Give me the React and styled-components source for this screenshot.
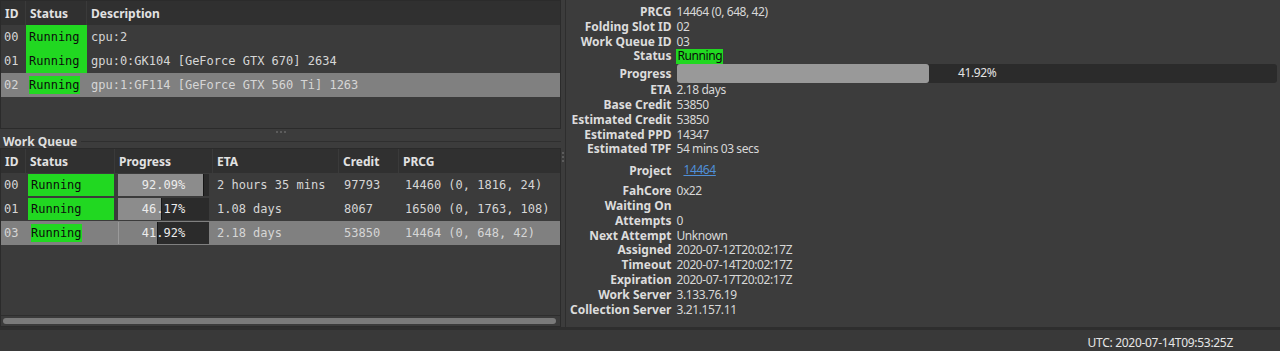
import React from "react";
import styled, { createGlobalStyle } from "styled-components";

const GlobalStyle = createGlobalStyle`
  html, body {
    margin: 0;
    background: #3c3c3c;
  }
  body {
    font-family: "Noto Sans", sans-serif;
    font-size: 12px;
    color: #dadada;
  }
`;

const GREEN = "#21d821";

const Window = styled.div`
  width: 1280px;
  height: 351px;
  display: flex;
  flex-direction: column;
  overflow: hidden;
`;

const Main = styled.div`
  height: 327px;
  display: flex;
`;

const LeftPane = styled.div`
  width: 561px;
  display: flex;
  flex-direction: column;
`;

const TableBox = styled.div`
  border: 1px solid #2b2b2b;
  background: #3b3b3b;
  display: flex;
  flex-direction: column;
  height: ${(p) => (p.$height ? `${p.$height}px` : "auto")};
  flex: ${(p) => (p.$grow ? 1 : "none")};
  box-sizing: border-box;
`;

const Row = styled.div`
  display: grid;
  grid-template-columns: ${(p) => p.$cols};
  height: 24px;
  background: ${(p) => (p.$selected ? "#808080" : "transparent")};
  font-family: "DejaVu Sans Mono", monospace;
  font-size: 12px;
  color: #d6d6d6;
`;

const HeaderRow = styled(Row)`
  background: #303030;
  font-family: "Noto Sans", sans-serif;
  font-weight: bold;
  color: #e2e2e2;
`;

const HeadCell = styled.div`
  display: flex;
  align-items: center;
  padding-left: 4px;
  border-right: 1px solid #3a3a3a;
  white-space: nowrap;
  &:last-child {
    border-right: none;
  }
`;

const Cell = styled.div`
  display: flex;
  align-items: center;
  padding-left: ${(p) => (p.$pad ?? 4)}px;
  white-space: nowrap;
  overflow: hidden;
`;

const StatusCell = styled.div`
  display: flex;
  align-items: center;
  margin: ${(p) => p.$inset || "0"};
  padding-left: 3px;
  background: ${(p) => (p.$selected ? "transparent" : GREEN)};
  color: #0c0c0c;
  white-space: nowrap;
`;

const StatusText = styled.span`
  background: ${GREEN};
  line-height: 18px;
`;

const ProgressCell = styled.div`
  position: relative;
  margin: 1px 4px 1px 3px;
  background: #2b2b2b;
  display: flex;
  align-items: center;
  justify-content: center;
`;

const ProgressFill = styled.div`
  position: absolute;
  left: 0;
  top: 0;
  bottom: 0;
  background: ${(p) => (p.$selected ? "#808080" : "#8c8c8c")};
  border-left: 1px solid ${(p) => (p.$selected ? "#9a9a9a" : "#8c8c8c")};
  box-shadow: 1px 0 0 #161616;
`;

const ProgressLabel = styled.span`
  position: relative;
  color: #ececec;
`;

const HSplit = styled.div`
  height: 7px;
  display: flex;
  justify-content: center;
  align-items: flex-start;
  padding-top: 2px;
  box-sizing: border-box;
`;

const Dots = styled.div`
  display: flex;
  flex-direction: ${(p) => (p.$vertical ? "column" : "row")};
  gap: 2px;
  & > span {
    width: 2px;
    height: 2px;
    background: #5c5c5c;
  }
`;

const GroupTitle = styled.div`
  height: 12px;
  display: flex;
  align-items: center;
  gap: 4px;
  padding-left: 3px;
  font-weight: bold;
  color: #dedede;
  line-height: 12px;
`;

const GroupLine = styled.div`
  flex: 1;
  height: 1px;
  background: #2f2f2f;
  margin-top: -2px;
`;

const Filler = styled.div`
  flex: 1;
`;

const ScrollTrack = styled.div`
  height: 11px;
  border-top: 1px solid #2e2e2e;
  display: flex;
  align-items: center;
  padding: 0 4px 0 2px;
  box-sizing: border-box;
`;

const ScrollThumb = styled.div`
  flex: 1;
  height: 6px;
  border-radius: 3px;
  background: #7a7a7a;
`;

const VSplit = styled.div`
  width: 4px;
  display: flex;
  justify-content: center;
  padding-top: 152px;
  box-sizing: border-box;
`;

const RightPane = styled.div`
  flex: 1;
  border-left: 1px solid #2e2e2e;
  padding: 5px 3px 0 4px;
`;

const InfoGrid = styled.div`
  display: grid;
  grid-template-columns: auto 1fr;
  column-gap: 5px;
`;

const Label = styled.div`
  font-weight: bold;
  text-align: right;
  white-space: nowrap;
  color: #dcdcdc;
  height: ${(p) => p.$h}px;
  line-height: ${(p) => p.$h}px;
`;

const Value = styled.div`
  white-space: nowrap;
  color: #d8d8d8;
  letter-spacing: -0.4px;
  height: ${(p) => p.$h}px;
  line-height: 14.8px;
  display: flex;
  align-items: center;
`;

const RunningBadge = styled.span`
  background: ${GREEN};
  color: #0a0a0a;
  padding: 0 1px;
`;

const BigBar = styled.div`
  position: relative;
  flex: 1;
  height: 19px;
  margin-left: 1px;
  border-radius: 3px;
  background: #2b2b2b;
  display: flex;
  align-items: center;
  justify-content: center;
`;

const BigFill = styled.div`
  position: absolute;
  left: 0;
  top: 0;
  bottom: 0;
  border-radius: 3px;
  background: #999999;
`;

const BigLabel = styled.span`
  position: relative;
  color: #e4e4e4;
`;

const Link = styled.a`
  color: #4f8fd8;
  text-decoration: underline;
  padding-left: 7px;
`;

const StatusBar = styled.div`
  height: 24px;
  border-top: 3px solid #2e2e2e;
  background: #393939;
  box-sizing: border-box;
  display: flex;
  justify-content: flex-end;
  align-items: center;
  padding: 3px 47px 0 0;
  color: #e6e6e6;
  letter-spacing: -0.3px;
`;

const slotCols = "25px 61px 1fr";
const queueCols = "25px 89px 98px 126px 60px 1fr";

const slots = [
  { id: "00", desc: "cpu:2" },
  { id: "01", desc: "gpu:0:GK104 [GeForce GTX 670] 2634" },
  { id: "02", desc: "gpu:1:GF114 [GeForce GTX 560 Ti] 1263", selected: true },
];

const queue = [
  { id: "00", pct: 92.09, eta: "2 hours 35 mins", credit: "97793", prcg: "14460 (0, 1816, 24)" },
  { id: "01", pct: 46.17, eta: "1.08 days", credit: "8067", prcg: "16500 (0, 1763, 108)" },
  { id: "03", pct: 41.92, eta: "2.18 days", credit: "53850", prcg: "14464 (0, 648, 42)", selected: true },
];

const info = [
  ["PRCG", "14464 (0, 648, 42)"],
  ["Folding Slot ID", "02"],
  ["Work Queue ID", "03"],
  ["Status", "status"],
  ["Progress", "progress"],
  ["ETA", "2.18 days"],
  ["Base Credit", "53850"],
  ["Estimated Credit", "53850"],
  ["Estimated PPD", "14347"],
  ["Estimated TPF", "54 mins 03 secs"],
  ["Project", "project"],
  ["FahCore", "0x22"],
  ["Waiting On", ""],
  ["Attempts", "0"],
  ["Next Attempt", "Unknown"],
  ["Assigned", "2020-07-12T20:02:17Z"],
  ["Timeout", "2020-07-14T20:02:17Z"],
  ["Expiration", "2020-07-17T20:02:17Z"],
  ["Work Server", "3.133.76.19"],
  ["Collection Server", "3.21.157.11"],
];

const ThreeDots = ({ vertical }) => (
  <Dots $vertical={vertical}>
    <span />
    <span />
    <span />
  </Dots>
);

const rowHeight = (value) =>
  value === "progress" ? 19 : value === "project" ? 27 : 14.8;

const renderValue = (value) => {
  const h = rowHeight(value);
  if (value === "status") {
    return (
      <Value $h={h}>
        <RunningBadge>Running</RunningBadge>
      </Value>
    );
  }
  if (value === "progress") {
    return (
      <Value $h={h}>
        <BigBar>
          <BigFill style={{ width: "41.92%" }} />
          <BigLabel>41.92%</BigLabel>
        </BigBar>
      </Value>
    );
  }
  if (value === "project") {
    return (
      <Value $h={h}>
        <Link>14464</Link>
      </Value>
    );
  }
  return <Value $h={h}>{value}</Value>;
};

const App = () => {
  return (
    <Window>
      <GlobalStyle />
      <Main>
        <LeftPane>
          <TableBox $height={129}>
            <HeaderRow $cols={slotCols}>
              <HeadCell>ID</HeadCell>
              <HeadCell>Status</HeadCell>
              <HeadCell>Description</HeadCell>
            </HeaderRow>
            {slots.map((s) => (
              <Row key={s.id} $cols={slotCols} $selected={s.selected}>
                <Cell $pad={3}>{s.id}</Cell>
                {s.selected ? (
                  <StatusCell $selected>
                    <StatusText>Running</StatusText>
                  </StatusCell>
                ) : (
                  <StatusCell>Running</StatusCell>
                )}
                <Cell>{s.desc}</Cell>
              </Row>
            ))}
          </TableBox>
          <HSplit>
            <ThreeDots />
          </HSplit>
          <GroupTitle>
            Work Queue
            <GroupLine />
          </GroupTitle>
          <TableBox $grow>
            <HeaderRow $cols={queueCols}>
              <HeadCell>ID</HeadCell>
              <HeadCell>Status</HeadCell>
              <HeadCell>Progress</HeadCell>
              <HeadCell>ETA</HeadCell>
              <HeadCell>Credit</HeadCell>
              <HeadCell>PRCG</HeadCell>
            </HeaderRow>
            {queue.map((q) => (
              <Row key={q.id} $cols={queueCols} $selected={q.selected}>
                <Cell $pad={3}>{q.id}</Cell>
                {q.selected ? (
                  <StatusCell $selected $inset="1px 1px 1px 2px">
                    <StatusText>Running</StatusText>
                  </StatusCell>
                ) : (
                  <StatusCell $inset="1px 1px 1px 2px">Running</StatusCell>
                )}
                <ProgressCell>
                  <ProgressFill
                    $selected={q.selected}
                    style={{ width: `${q.pct}%` }}
                  />
                  <ProgressLabel>{q.pct.toFixed(2)}%</ProgressLabel>
                </ProgressCell>
                <Cell>{q.eta}</Cell>
                <Cell $pad={5}>{q.credit}</Cell>
                <Cell $pad={6}>{q.prcg}</Cell>
              </Row>
            ))}
            <Filler />
            <ScrollTrack>
              <ScrollThumb />
            </ScrollTrack>
          </TableBox>
        </LeftPane>
        <VSplit>
          <ThreeDots vertical />
        </VSplit>
        <RightPane>
          <InfoGrid>
            {info.map(([label, value]) => (
              <React.Fragment key={label}>
                <Label $h={rowHeight(value)}>{label}</Label>
                {renderValue(value)}
              </React.Fragment>
            ))}
          </InfoGrid>
        </RightPane>
      </Main>
      <StatusBar>UTC: 2020-07-14T09:53:25Z</StatusBar>
    </Window>
  );
};

export default App;
